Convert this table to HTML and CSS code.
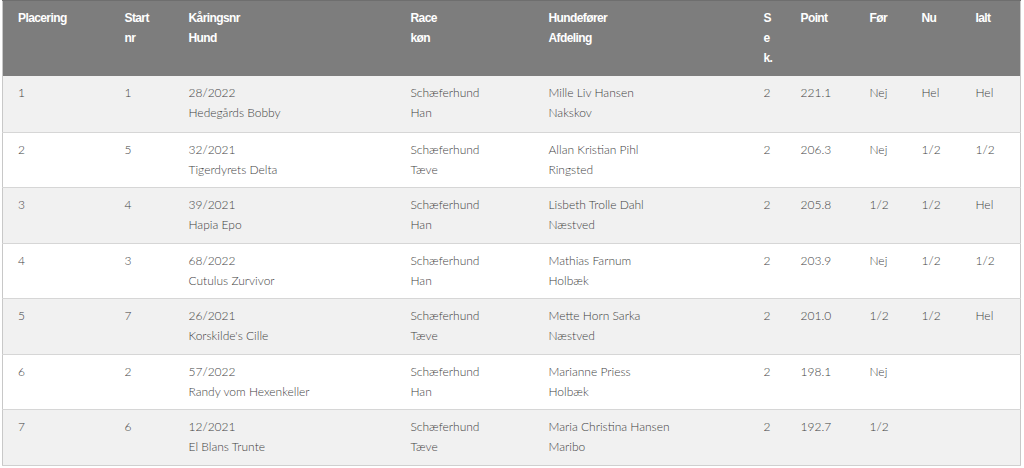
FILE: index.html
```html
<!DOCTYPE html>
<html lang="da">
<head>
<meta charset="utf-8">
<title>Resultater</title>
<link rel="stylesheet" href="styles.css">
</head>
<body>
<div class="wrap">
<table class="results">
<colgroup>
<col class="c-plac"><col class="c-start"><col class="c-hund"><col class="c-race"><col class="c-forer"><col class="c-sek"><col class="c-point"><col class="c-for"><col class="c-nu"><col class="c-ialt">
</colgroup>
<thead>
<tr>
<th>Placering</th>
<th>Start<br>nr</th>
<th>Kåringsnr<br>Hund</th>
<th>Race<br>køn</th>
<th>Hundefører<br>Afdeling</th>
<th class="sek">Sek.</th>
<th>Point</th>
<th>Før</th>
<th>Nu</th>
<th>Ialt</th>
</tr>
</thead>
<tbody>
<tr><td>1</td><td>1</td><td>28/2022<br>Hedegårds Bobby</td><td>Schæferhund<br>Han</td><td>Mille Liv Hansen<br>Nakskov</td><td>2</td><td>221.1</td><td>Nej</td><td>Hel</td><td>Hel</td></tr>
<tr><td>2</td><td>5</td><td>32/2021<br>Tigerdyrets Delta</td><td>Schæferhund<br>Tæve</td><td>Allan Kristian Pihl<br>Ringsted</td><td>2</td><td>206.3</td><td>Nej</td><td>1/2</td><td>1/2</td></tr>
<tr><td>3</td><td>4</td><td>39/2021<br>Hapia Epo</td><td>Schæferhund<br>Han</td><td>Lisbeth Trolle Dahl<br>Næstved</td><td>2</td><td>205.8</td><td>1/2</td><td>1/2</td><td>Hel</td></tr>
<tr><td>4</td><td>3</td><td>68/2022<br>Cutulus Zurvivor</td><td>Schæferhund<br>Han</td><td>Mathias Farnum<br>Holbæk</td><td>2</td><td>203.9</td><td>Nej</td><td>1/2</td><td>1/2</td></tr>
<tr><td>5</td><td>7</td><td>26/2021<br>Korskilde's Cille</td><td>Schæferhund<br>Tæve</td><td>Mette Horn Sarka<br>Næstved</td><td>2</td><td>201.0</td><td>1/2</td><td>1/2</td><td>Hel</td></tr>
<tr><td>6</td><td>2</td><td>57/2022<br>Randy vom Hexenkeller</td><td>Schæferhund<br>Han</td><td>Marianne Priess<br>Holbæk</td><td>2</td><td>198.1</td><td>Nej</td><td></td><td></td></tr>
<tr><td>7</td><td>6</td><td>12/2021<br>El Blans Trunte</td><td>Schæferhund<br>Tæve</td><td>Maria Christina Hansen<br>Maribo</td><td>2</td><td>192.7</td><td>1/2</td><td></td><td></td></tr>
</tbody>
</table>
</div>
</body>
</html>
```
FILE: styles.css
```css
html, body {
  margin: 0;
  padding: 0;
  background: #ffffff;
}
.wrap {
  padding: 0 4px 0 2px;
}
.results {
  width: 1018px;
  table-layout: fixed;
  border-collapse: collapse;
  border-left: 1px solid #c8c8c8;
  border-right: 1px solid #c8c8c8;
  border-bottom: 1px solid #d0d0d0;
  font-family: "Lato", "Open Sans", sans-serif;
  font-weight: 300;
  font-size: 12px;
  color: #3f3f3f;
}
.c-plac { width: 107px; }
.c-start { width: 64px; }
.c-hund { width: 222px; }
.c-race { width: 138px; }
.c-forer { width: 215px; }
.c-sek { width: 37px; }
.c-point { width: 69px; }
.c-for { width: 52px; }
.c-nu { width: 54px; }
.c-ialt { width: 60px; }
.results thead th {
  background: #7d7d7d;
  color: #ffffff;
  font-family: "Liberation Sans", Arial, sans-serif;
  font-weight: bold;
  font-size: 12px;
  letter-spacing: -0.6px;
  text-align: left;
  vertical-align: top;
  line-height: 20px;
  padding: 7px 14px 8px 15px;
  border-top: 1px solid #6e6e6e;
}
.results th.sek {
  word-break: break-all;
}
.results tbody td {
  vertical-align: top;
  line-height: 20px;
  padding: 7px 14px 7.5px 15px;
  border-top: 1px solid #d6d6d6;
}
.results tbody tr:first-child td {
  border-top: none;
  padding-bottom: 8.5px;
}
.results tbody tr:nth-child(odd) td {
  background: #f1f1f1;
}
.results tbody tr:nth-child(even) td {
  background: #ffffff;
}
```
